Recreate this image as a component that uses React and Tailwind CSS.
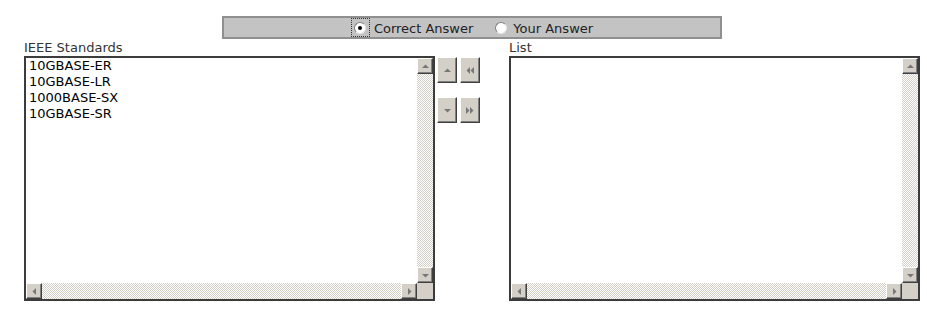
const bevel =
  "bg-[#d4d0c8] border border-t-white border-l-white border-r-[#404040] border-b-[#404040] shadow-[inset_-1px_-1px_0_#808080]";
const track =
  "bg-[image:repeating-conic-gradient(#d4d0c8_0%_25%,#ffffff_0%_50%)] bg-[length:2px_2px]";

function Arrow({ dir }) {
  const pts = {
    up: "1,6 4.5,2.5 8,6",
    down: "1,3 8,3 4.5,6.5",
    left: "6,1 6,8 2.5,4.5",
    right: "3,1 3,8 6.5,4.5",
  };
  return (
    <svg width="9" height="9" viewBox="0 0 9 9">
      <polygon points={pts[dir]} fill="#777" />
    </svg>
  );
}

function ScrollBtn({ dir }) {
  return (
    <div className={`w-[16px] h-[16px] shrink-0 flex items-center justify-center ${bevel}`}>
      <Arrow dir={dir} />
    </div>
  );
}

function Listbox({ items = [] }) {
  return (
    <div className="w-[411px] h-[245px] border-2 border-[#3c3c3c] flex flex-col bg-white">
      <div className="flex flex-1 min-h-0">
        <div className="flex-1 pl-[3px] leading-[16px] text-black">
          {items.map((it) => (
            <div key={it}>{it}</div>
          ))}
        </div>
        <div className="w-[16px] flex flex-col">
          <ScrollBtn dir="up" />
          <div className={`flex-1 ${track}`} />
          <ScrollBtn dir="down" />
        </div>
      </div>
      <div className="flex h-[16px]">
        <ScrollBtn dir="left" />
        <div className={`flex-1 ${track}`} />
        <ScrollBtn dir="right" />
        <div className="w-[16px] bg-[#d4d0c8]" />
      </div>
    </div>
  );
}

function MoveBtn({ children }) {
  return (
    <div className={`w-[20px] h-[26px] flex items-center justify-center ${bevel}`}>
      {children}
    </div>
  );
}

function Radio({ checked }) {
  return (
    <div className="w-[12px] h-[12px] rounded-full bg-white border border-t-[#808080] border-l-[#808080] border-r-[#e8e8e8] border-b-[#e8e8e8] flex items-center justify-center">
      {checked && <div className="w-[4px] h-[4px] rounded-full bg-black" />}
    </div>
  );
}

export default function App() {
  return (
    <div className="w-[927px] h-[314px] bg-white font-['DejaVu_Sans',sans-serif] text-[13px] text-[#222]">
      {/* answer toggle */}
      <div className="pt-[16px] pl-[222px]">
        <div className="w-[500px] h-[23px] bg-[#c3c3c3] border-2 border-[#8f8f8f] flex items-center justify-center">
          <div className="w-[19px] h-[19px] border border-dotted border-[#333] flex items-center justify-center">
            <Radio checked />
          </div>
          <span className="ml-[4px] pt-[3px]">Correct Answer</span>
          <div className="ml-[22px]">
            <Radio />
          </div>
          <span className="ml-[6px] pt-[3px]">Your Answer</span>
        </div>
      </div>

      <div className="flex pl-[24px]">
        <div>
          <div className="h-[17px] leading-[17px] text-[#333]">IEEE Standards</div>
          <Listbox items={["10GBASE-ER", "10GBASE-LR", "1000BASE-SX", "10GBASE-SR"]} />
        </div>

        <div className="ml-[2px] mt-[18px] flex flex-col gap-[14px]">
          <div className="flex gap-[3px]">
            <MoveBtn>
              <Arrow dir="up" />
            </MoveBtn>
            <MoveBtn>
              <svg width="10" height="9" viewBox="0 0 10 9">
                <polygon points="5,1 5,8 1.5,4.5" fill="#777" />
                <polygon points="9,1 9,8 5.5,4.5" fill="#777" />
              </svg>
            </MoveBtn>
          </div>
          <div className="flex gap-[3px]">
            <MoveBtn>
              <Arrow dir="down" />
            </MoveBtn>
            <MoveBtn>
              <svg width="10" height="9" viewBox="0 0 10 9">
                <polygon points="1,1 1,8 4.5,4.5" fill="#777" />
                <polygon points="5,1 5,8 8.5,4.5" fill="#777" />
              </svg>
            </MoveBtn>
          </div>
        </div>

        <div className="ml-[29px]">
          <div className="h-[17px] leading-[17px] text-[#333]">List</div>
          <Listbox />
        </div>
      </div>
    </div>
  );
}
